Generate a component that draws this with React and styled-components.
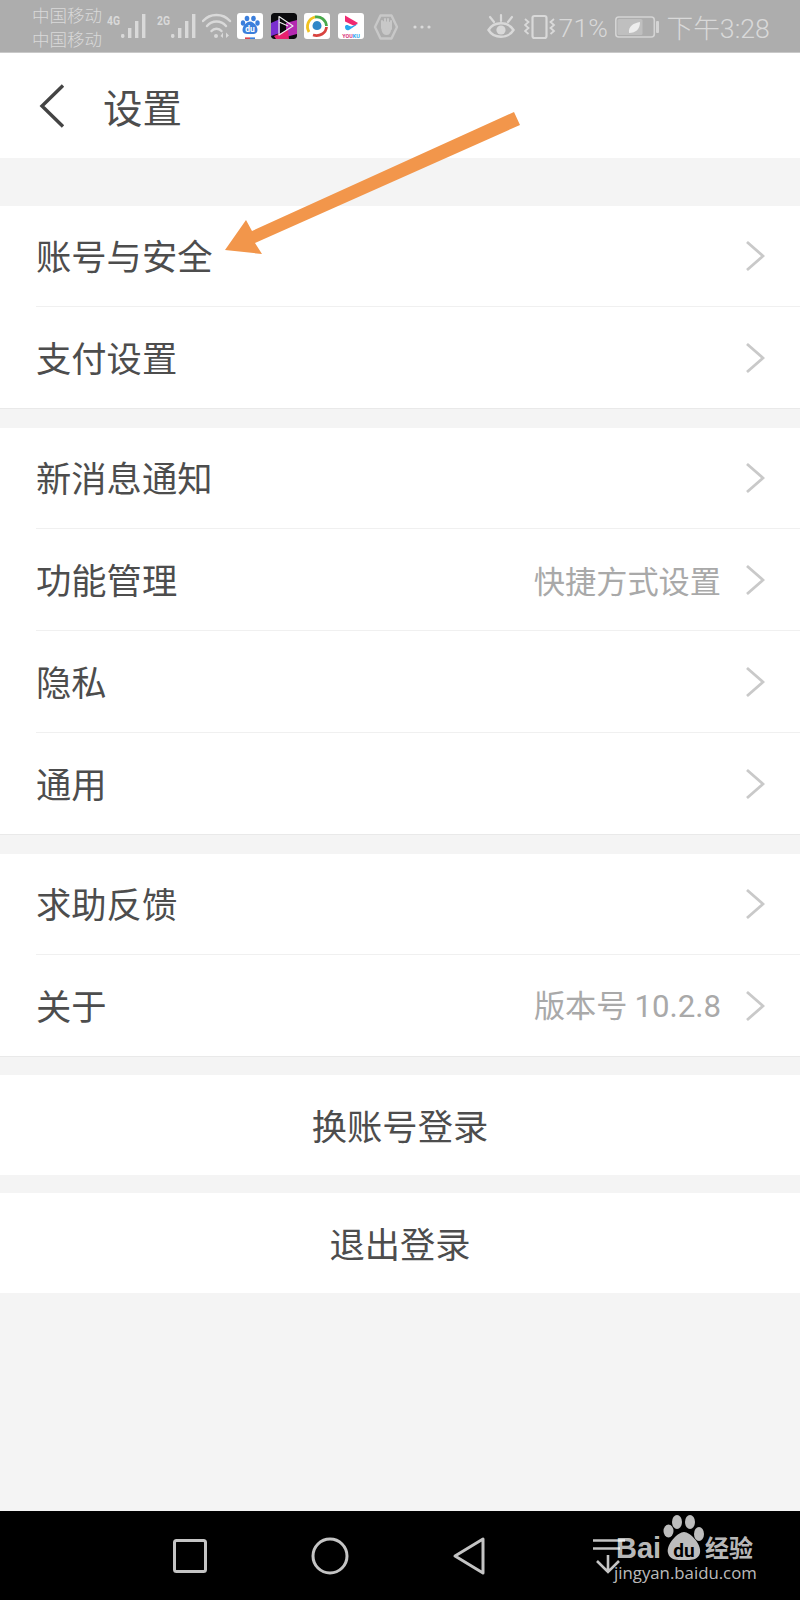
import styled, { createGlobalStyle } from 'styled-components'

const GlobalStyle = createGlobalStyle`
  html, body {
    margin: 0;
    padding: 0;
    background: #f4f4f4;
  }
  * {
    box-sizing: border-box;
  }
`

const Page = styled.div`
  position: relative;
  width: 800px;
  height: 1600px;
  display: flex;
  flex-direction: column;
  background: #f4f4f4;
  font-family: "Noto Sans CJK SC", "Noto Sans", sans-serif;
  overflow: hidden;
`

const StatusBar = styled.div`
  height: 53px;
  flex: none;
  display: flex;
  align-items: center;
  padding-left: 32px;
  background: #adadad;
  border-bottom: 1px solid #c9c9c9;
  color: #d9d9d9;
`

const Carrier = styled.div`
  width: 74px;
  padding-top: 2px;
  font-size: 17.5px;
  line-height: 24px;
  white-space: nowrap;
  font-weight: 300;
`

const StatusSvg = styled.svg`
  width: ${p => p.$w}px;
  height: 40px;
  flex: none;
  margin-left: ${p => p.$ml || 0}px;
  display: block;
`

const AppIcons = styled.div`
  display: flex;
  gap: 7.5px;
  margin-left: 5px;
`

const AppIcon = styled.svg`
  width: 26px;
  height: 26px;
  display: block;
  border-radius: 3px;
  flex: none;
`

const StatusPercent = styled.span`
  width: 47px;
  padding-top: 3px;
  font-family: Roboto, sans-serif;
  font-size: 26.5px;
  font-weight: 300;
  margin-left: 3px;
  letter-spacing: 0.2px;
  white-space: nowrap;
`

const StatusTime = styled.span`
  margin-left: 6px;
  padding-top: 1px;
  font-size: 26.7px;
  font-weight: 300;
  font-family: Roboto, "Noto Sans CJK SC", sans-serif;
  white-space: nowrap;
`

const Header = styled.div`
  height: 105px;
  flex: none;
  display: flex;
  align-items: center;
  padding-left: 38px;
  background: #fff;
`

const BackSvg = styled.svg`
  width: 28px;
  height: 46px;
  display: block;
  flex: none;
`

const Title = styled.h1`
  margin: 0 0 0 37px;
  font-size: 39.5px;
  line-height: 50px;
  font-weight: 400;
  color: #4d4d4d;
`

const Section = styled.div`
  flex: none;
  margin-top: ${p => p.$gap}px;
  padding-left: 36px;
  background: #fff;
  border-bottom: 1px solid #e9e9e9;
`

const Row = styled.div`
  height: ${p => p.$h || 101}px;
  display: flex;
  align-items: center;
  padding-right: 35px;
  border-bottom: 1px solid #f0f0f0;

  &:last-child {
    border-bottom: none;
  }
`

const RowLabel = styled.span`
  flex: 1;
  padding-bottom: 2px;
  font-size: 35.3px;
  line-height: 48px;
  color: #4d4d4d;
`

const RowValue = styled.span`
  font-size: 31.2px;
  line-height: 44px;
  color: #a9a9a9;
  margin-right: 24px;
`

const Version = styled.span`
  font-family: Roboto, sans-serif;
`

const ChevronSvg = styled.svg`
  width: 20px;
  height: 32px;
  display: block;
  flex: none;
`

const ActionButton = styled.div`
  flex: none;
  height: ${p => p.$h}px;
  margin-top: ${p => p.$gap}px;
  padding-bottom: 2px;
  display: flex;
  align-items: center;
  justify-content: center;
  background: #fff;
  font-size: 35.3px;
  color: #4d4d4d;
`

const Spacer = styled.div`
  flex: 1;
`

const NavBar = styled.div`
  position: relative;
  height: 89px;
  flex: none;
  display: flex;
  align-items: center;
  padding-left: 172px;
  gap: 103px;
  background: #000;
`

const NavIcon = styled.svg`
  width: ${p => p.$w}px;
  height: 40px;
  flex: none;
  display: block;
  margin-left: ${p => p.$ml || 0}px;
`

const Watermark = styled.div`
  position: absolute;
  left: 612px;
  top: 0;
  width: 160px;
  height: 89px;
  color: rgba(255, 255, 255, 0.74);
`

const WmBrand = styled.div`
  position: absolute;
  left: 4px;
  top: 20px;
  font-family: "Liberation Sans", sans-serif;
  font-weight: 700;
  font-size: 29px;
  line-height: 34px;
`

const WmCn = styled.div`
  position: absolute;
  left: 93px;
  top: 23px;
  font-size: 24px;
  line-height: 26px;
  font-weight: 700;
  white-space: nowrap;
`

const WmDomain = styled.div`
  position: absolute;
  left: 2px;
  top: 50px;
  font-family: "Open Sans", sans-serif;
  font-size: 16.8px;
  line-height: 24px;
  white-space: nowrap;
`

const WmPaw = styled.svg`
  position: absolute;
  left: 51px;
  top: 4px;
  width: 42px;
  height: 46px;
`

const ArrowLayer = styled.svg`
  position: absolute;
  left: 0;
  top: 0;
  width: 800px;
  height: 300px;
  pointer-events: none;
`

const ICON = '#d9d9d9'

const Signal = ({ label, ml }) => (
  <StatusSvg $w={40} $ml={ml} viewBox="0 0 40 40">
    <text x="1" y="19" fontSize="13" fontWeight="700" textLength="13" lengthAdjust="spacingAndGlyphs" fontFamily="Roboto, sans-serif" fill={ICON}>{label}</text>
    <g fill={ICON}>
      <rect x="15" y="28" width="3.4" height="4" rx="1.4" />
      <rect x="22" y="22" width="3.4" height="10" />
      <rect x="29" y="15" width="3.4" height="17" />
      <rect x="36" y="8" width="3.4" height="24" />
    </g>
  </StatusSvg>
)

const Wifi = () => (
  <StatusSvg $w={30} $ml={6} viewBox="0 0 30 40">
    <g fill="none" stroke={ICON} strokeWidth="2.4" strokeLinecap="round">
      <path d="M1 15 C 8 7, 21 7, 28 15" />
      <path d="M5 20 C 10 14, 19 14, 24 20" />
      <path d="M9.5 25 C 12 22, 17 22, 19.5 25" />
    </g>
    <circle cx="14" cy="30" r="2" fill={ICON} />
    <path d="M21 26.5 L21 32 L18.5 30 Z M24 26.5 L24 32 L27 29.5 Z" fill={ICON} />
  </StatusSvg>
)

const BaiduApp = () => (
  <AppIcon viewBox="0 0 26 26">
    <rect width="26" height="26" fill="#fff" />
    <g fill="#3b7fdc">
      <ellipse cx="10" cy="5.5" rx="2.3" ry="2.8" />
      <ellipse cx="16.5" cy="5.5" rx="2.3" ry="2.8" />
      <ellipse cx="6" cy="10" rx="2.2" ry="2.7" />
      <ellipse cx="20.5" cy="10" rx="2.2" ry="2.7" />
      <path d="M13 8.5 C9.5 8.5 5.5 13 5.5 17 C5.5 21 9 21 13 21 C17 21 20.5 21 20.5 17 C20.5 13 16.5 8.5 13 8.5Z" />
    </g>
    <text x="13" y="19" textAnchor="middle" fontSize="8.5" fontWeight="700" fontFamily="Roboto, sans-serif" fill="#fff">du</text>
    <rect x="8" y="24.4" width="5" height="1.6" fill="#d9434e" />
    <rect x="13" y="24.4" width="5" height="1.6" fill="#3b7fdc" />
  </AppIcon>
)

const VideoApp = () => (
  <AppIcon viewBox="0 0 26 26">
    <rect width="26" height="26" rx="3" fill="#0a0a0d" />
    <path d="M0 10 L9 6 L9 20 L0 23Z" fill="#7a2dd0" />
    <path d="M15 10 L26 7 L26 21 L15 24Z" fill="#b42ab0" />
    <path d="M3 23 L17 17 L18 26 L5 26Z" fill="#e8226e" />
    <path d="M8 3.5 L22 13 L8 22Z M8 9 L17 13" fill="none" stroke="#ececec" strokeWidth="1.2" strokeLinejoin="round" />
  </AppIcon>
)

const TencentApp = () => (
  <AppIcon viewBox="0 0 26 26">
    <rect width="26" height="26" fill="#fff" />
    <g fill="none" strokeWidth="2.8">
      <path d="M5 19 C1.5 13 4.5 5.5 11 4" stroke="#f2c21f" />
      <path d="M11 4 C17 3 22 7 22.5 13" stroke="#49a94c" />
      <path d="M22.5 14 C22 20 16 24 9 22" stroke="#d8433f" />
    </g>
    <path d="M13 8 C16 8 17.5 11 17.5 13 C17.5 15.5 15.5 17 13 17 C10.5 17 8.5 15.5 8.5 13 C8.5 11 10 8 13 8Z" fill="#2f86c8" />
  </AppIcon>
)

const YoukuApp = () => (
  <AppIcon viewBox="0 0 26 26">
    <rect width="26" height="26" fill="#fff" />
    <path d="M7 2.5 L20 10 L16.5 13 L7 8.5Z" fill="#f02a71" />
    <path d="M20 11 L11 17 C8.5 18 7 16 7 14 C7 12 9 11.5 10.5 12.5 L13 13.5Z" fill="#28a8ee" />
    <text x="13" y="24.5" textAnchor="middle" fontSize="5.4" fontWeight="700" fontFamily="Roboto, sans-serif">
      <tspan fill="#d8337a">YOU</tspan><tspan fill="#28a8ee">KU</tspan>
    </text>
  </AppIcon>
)

const HandBadge = () => (
  <StatusSvg $w={28} $ml={9} viewBox="0 0 28 40">
    <path d="M7.5 9.5 L18.5 9.5 L24 21 L18.5 32.5 L7.5 32.5 L2 21Z" fill="none" stroke="#c8c8c8" strokeWidth="2.4" strokeLinejoin="round" />
    <path d="M8.5 15 L8.5 24 Q9.5 29 13.5 29 Q17.5 29 18 24 L18 16" fill="#c8c8c8" />
    <path d="M9 15 L9 22 M12 13 L12 22 M15 13 L15 22 M18 15 L18 23" fill="none" stroke="#c8c8c8" strokeWidth="2" strokeLinecap="round" />
  </StatusSvg>
)

const MoreDots = () => (
  <StatusSvg $w={20} $ml={11} viewBox="0 0 20 40">
    <g fill={ICON}>
      <circle cx="3" cy="21" r="1.6" />
      <circle cx="10" cy="21" r="1.6" />
      <circle cx="17" cy="21" r="1.6" />
    </g>
  </StatusSvg>
)

const EyeIcon = () => (
  <StatusSvg $w={28} $ml={55} viewBox="0 0 28 40">
    <path d="M1.5 24 C7 15, 21 15, 26.5 24 C21 33, 7 33, 1.5 24Z" fill="none" stroke={ICON} strokeWidth="2.4" />
    <circle cx="14" cy="24" r="4.6" fill={ICON} />
    <path d="M3 11 L7 16 M14 9 L14 15 M25 11 L21 16" stroke={ICON} strokeWidth="2.2" strokeLinecap="round" />
  </StatusSvg>
)

const VibrateIcon = () => (
  <StatusSvg $w={32} $ml={9} viewBox="0 0 32 40">
    <rect x="8.5" y="10" width="14" height="22" rx="2" fill="none" stroke={ICON} strokeWidth="2.2" />
    <path d="M1 13 L4.5 16 L1 19 L4.5 22 L1 25 L4.5 28 M30 13 L26.5 16 L30 19 L26.5 22 L30 25 L26.5 28" fill="none" stroke={ICON} strokeWidth="1.8" />
  </StatusSvg>
)

const BatteryIcon = () => (
  <StatusSvg $w={46} $ml={9} viewBox="0 0 46 40">
    <rect x="0.8" y="11" width="38.5" height="20" rx="3" fill="none" stroke="#d4d4d4" strokeWidth="1.6" />
    <rect x="2.5" y="13" width="25" height="16" rx="1.5" fill="#bfbfbf" />
    <path d="M14 27 C13 20 19 17 25 16 C25 23 21 27 14 27Z" fill="#ededed" />
    <rect x="41" y="15" width="3" height="12" rx="1" fill="#d4d4d4" />
  </StatusSvg>
)

const Chevron = () => (
  <ChevronSvg viewBox="0 0 20 32">
    <path d="M2 2 L18 16 L2 30" fill="none" stroke="#c9c9c9" strokeWidth="2.8" />
  </ChevronSvg>
)

const SettingRow = ({ label, value, h }) => (
  <Row $h={h}>
    <RowLabel>{label}</RowLabel>
    {value && <RowValue>{value}</RowValue>}
    <Chevron />
  </Row>
)

export default function App () {
  return (
    <Page>
      <GlobalStyle />
      <StatusBar>
        <Carrier>中国移动<br />中国移动</Carrier>
        <Signal label="4G" />
        <Signal label="2G" ml={10} />
        <Wifi />
        <AppIcons>
          <BaiduApp />
          <VideoApp />
          <TencentApp />
          <YoukuApp />
        </AppIcons>
        <HandBadge />
        <MoreDots />
        <EyeIcon />
        <VibrateIcon />
        <StatusPercent>71%</StatusPercent>
        <BatteryIcon />
        <StatusTime>下午3:28</StatusTime>
      </StatusBar>

      <Header>
        <BackSvg viewBox="0 0 28 46">
          <path d="M25 2.5 L4 23 L25 43.5" fill="none" stroke="#444" strokeWidth="3.4" />
        </BackSvg>
        <Title>设置</Title>
      </Header>

      <Section $gap={48}>
        <SettingRow label="账号与安全" />
        <SettingRow label="支付设置" />
      </Section>

      <Section $gap={19}>
        <SettingRow label="新消息通知" />
        <SettingRow label="功能管理" value="快捷方式设置" h={102} />
        <SettingRow label="隐私" h={102} />
        <SettingRow label="通用" />
      </Section>

      <Section $gap={19}>
        <SettingRow label="求助反馈" />
        <SettingRow label="关于" value={<>版本号 <Version>10.2.8</Version></>} />
      </Section>

      <ActionButton $gap={18} $h={100}>换账号登录</ActionButton>
      <ActionButton $gap={18} $h={100}>退出登录</ActionButton>
      <Spacer />

      <NavBar>
        <NavIcon $w={36} viewBox="0 0 36 40">
          <rect x="2.5" y="4.5" width="31" height="31" rx="2" fill="none" stroke="#c4c4c4" strokeWidth="3" />
        </NavIcon>
        <NavIcon $w={38} viewBox="0 0 38 40">
          <circle cx="19" cy="20" r="17" fill="none" stroke="#c4c4c4" strokeWidth="3" />
        </NavIcon>
        <NavIcon $w={34} viewBox="0 0 34 40">
          <path d="M31 3 L31 37 L3 20Z" fill="none" stroke="#c4c4c4" strokeWidth="3" strokeLinejoin="round" />
        </NavIcon>
        <NavIcon $w={32} $ml={4} viewBox="0 0 32 40">
          <path d="M0 4.5 L32 4.5 M0 12.5 L27 12.5 M15 19 L15 36 M4 25 L15 36 L26 25" fill="none" stroke="#c4c4c4" strokeWidth="2.6" />
        </NavIcon>
        <Watermark>
          <WmPaw viewBox="0 0 42 46">
            <g fill="rgba(255,255,255,0.74)">
              <ellipse cx="5.5" cy="16" rx="5" ry="6.5" />
              <ellipse cx="14" cy="7" rx="5" ry="7" />
              <ellipse cx="27" cy="7" rx="5" ry="7" />
              <ellipse cx="36" cy="19" rx="5" ry="7" />
              <path d="M21 17 C15 17 3 29 5 38 C7 46 16 45 21 45 C26 45 35 46 37 38 C39 29 27 17 21 17Z" />
            </g>
            <text x="21" y="42" textAnchor="middle" fontSize="19" fontWeight="700" fontFamily="Roboto, sans-serif" fill="#000">du</text>
          </WmPaw>
          <WmBrand>Bai</WmBrand>
          <WmCn>经验</WmCn>
          <WmDomain>jingyan.baidu.com</WmDomain>
        </Watermark>
      </NavBar>

      <ArrowLayer viewBox="0 0 800 300">
        <path d="M514 112 L520 125 L255 243 L262 254 L225 250 L246 220 L252 231Z" fill="#f2964b" />
      </ArrowLayer>
    </Page>
  )
}
